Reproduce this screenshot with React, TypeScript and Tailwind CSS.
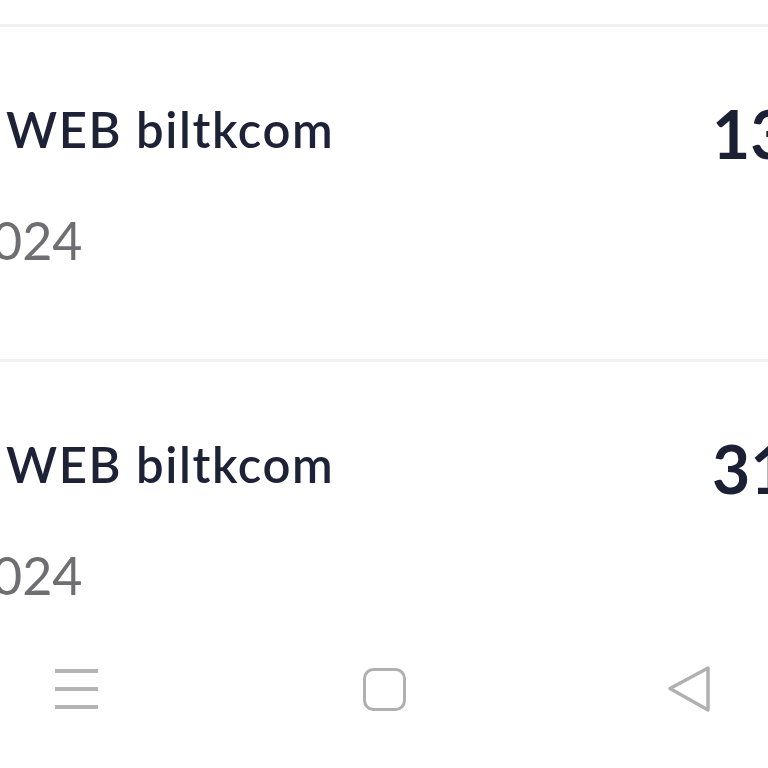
import React from 'react';

interface Entry {
  title: string;
  date: string;
  amount: string;
}

const entries: Entry[] = [
  { title: 'WEB biltkcom', date: '024', amount: '13' },
  { title: 'WEB biltkcom', date: '024', amount: '31' },
];

function Row({ entry, last }: { entry: Entry; last?: boolean }) {
  return (
    <div className={`border-t-[3px] border-[#f1f1f1] pt-[78px] ${last ? 'pb-0' : 'pb-[93px]'}`}>
      <div className="flex items-start">
        <div className="flex-1 min-w-0">
          <div className="pl-[6px] text-[49px] leading-none font-semibold tracking-[1.6px] text-[#1e2236] whitespace-nowrap">
            {entry.title}
          </div>
          <div className="mt-[60px] -ml-[8px] text-[52px] leading-none text-[#6f6f73] whitespace-nowrap">
            {entry.date}
          </div>
        </div>
        <div className="w-[56px] shrink-0 -mt-[4px] text-[66px] leading-none font-bold text-[#1c2034] whitespace-nowrap">
          {entry.amount}
        </div>
      </div>
    </div>
  );
}

function NavBar() {
  return (
    <div className="flex items-center justify-between pl-[55px] pr-[57px] pt-[64px]">
      {/* recents */}
      <svg width="43" height="40" viewBox="0 0 43 40" fill="none" stroke="#b4b4b4" strokeWidth="4">
        <line x1="0" y1="2" x2="43" y2="2" />
        <line x1="0" y1="20" x2="43" y2="20" />
        <line x1="0" y1="38" x2="43" y2="38" />
      </svg>
      {/* home */}
      <svg className="ml-[4px]" width="43" height="43" viewBox="0 0 43 43" fill="none" stroke="#b0b0b0" strokeWidth="3">
        <rect x="1.5" y="1.5" width="40" height="40" rx="9" />
      </svg>
      {/* back */}
      <svg width="44" height="48" viewBox="0 0 44 48" fill="none" stroke="#b0b0b0" strokeWidth="3.5" strokeLinejoin="round" strokeLinecap="round">
        <path d="M41 3 L3 23.5 L41 45 Z" />
      </svg>
    </div>
  );
}

export default function App() {
  return (
    <div className="w-[768px] h-[768px] overflow-hidden bg-white" style={{ fontFamily: 'Lato, "Noto Sans", sans-serif' }}>
      <div className="h-[24px]" />
      {entries.map((e, i) => (
        <Row key={i} entry={e} last={i === entries.length - 1} />
      ))}
      <NavBar />
    </div>
  );
}
